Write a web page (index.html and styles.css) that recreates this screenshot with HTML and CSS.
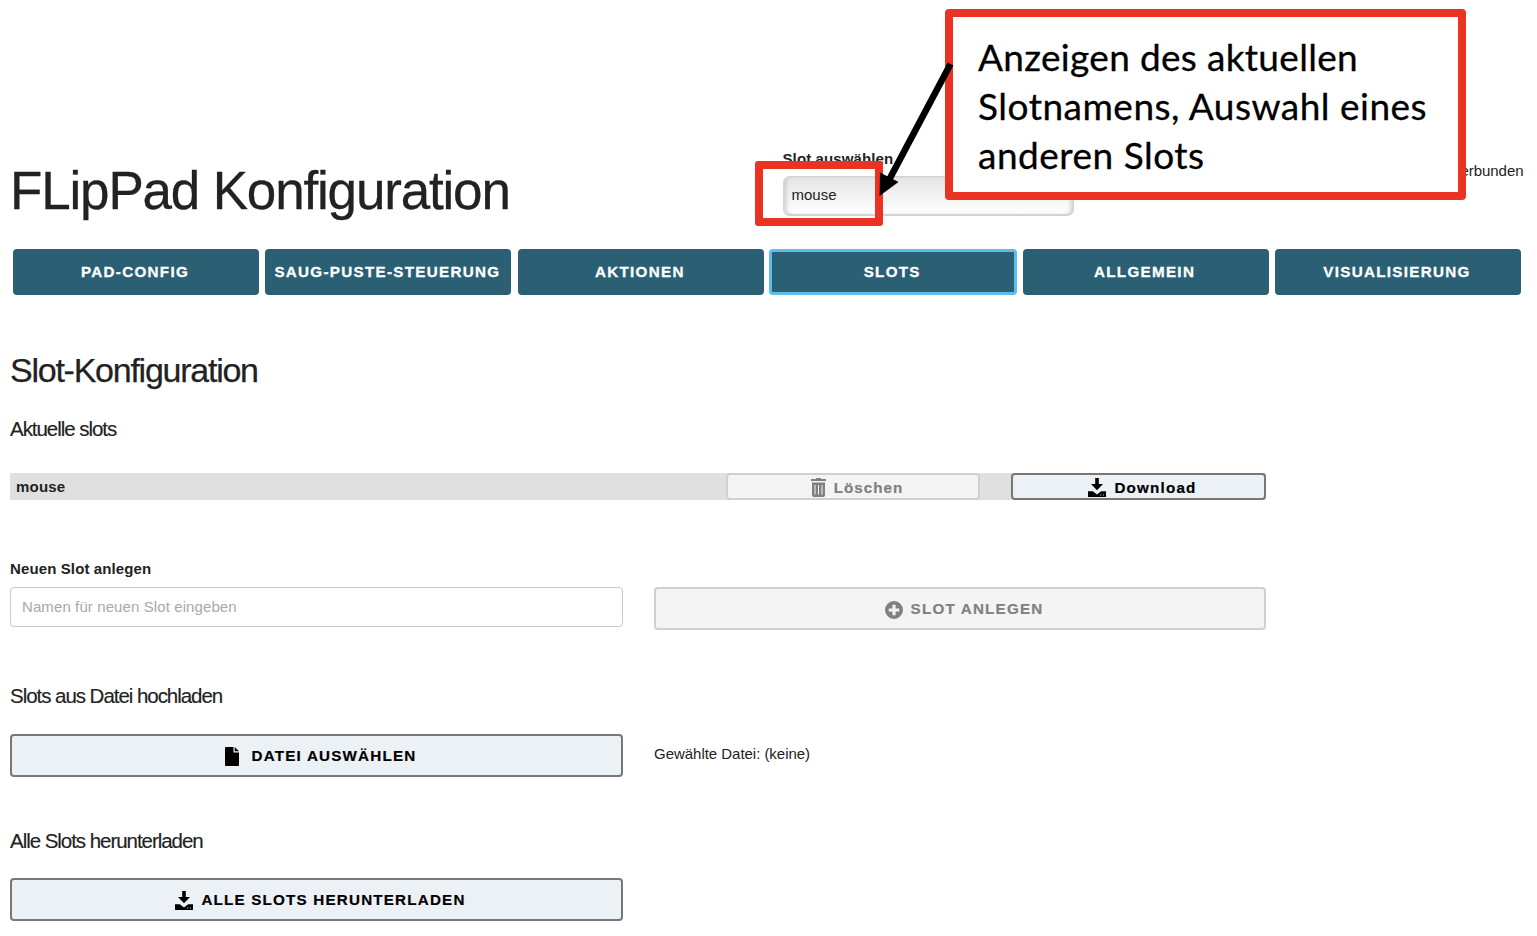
FILE: index.html
```html
<!DOCTYPE html>
<html lang="de">
<head>
<meta charset="utf-8">
<title>FLipPad Konfiguration</title>
<link rel="stylesheet" href="styles.css">
</head>
<body>
<svg class="defs" width="0" height="0">
  <symbol id="download" viewBox="0 0 18 19">
    <path d="M7.200 0h3.600v6h4.200L9 12.300 3 6h4.200z"/>
    <path d="M0 13.200h4.800L9 16.600l4.200-3.400H18V19H0z"/>
    <path class="dots" d="M12.200 16.600h1v1h-1zM14.800 16.600h1v1h-1z"/>
  </symbol>
</svg>
<header class="header">
  <h1 class="title">FLipPad Konfiguration</h1>
  <div class="slot-select">
    <label class="label select-label" for="slot">Slot auswählen</label>
    <div class="select" id="slot"><span>mouse</span><span class="select-arrow"></span></div>
  </div>
  <div class="status">Verbunden</div>
</header>
<nav class="tabs">
  <button class="tab">PAD-CONFIG</button>
  <button class="tab">SAUG-PUSTE-STEUERUNG</button>
  <button class="tab">AKTIONEN</button>
  <button class="tab active">SLOTS</button>
  <button class="tab">ALLGEMEIN</button>
  <button class="tab">VISUALISIERUNG</button>
</nav>
<main class="content">
  <h2 class="section-title">Slot-Konfiguration</h2>
  <h3 class="sub current">Aktuelle slots</h3>
  <div class="slot-row">
    <span class="slot-name">mouse</span>
    <button class="btn small disabled">
      <svg class="icon" width="15" height="19" viewBox="0 0 15 19"><path d="M5 0h5v1h5v2H0V1h5zM1 4.500h13V17q0 2-2 2H3q-2 0-2-2zM3.500 7v9.500h1V7zM7 7v9.500h1V7zM10.500 7v9.500h1V7z" fill-rule="evenodd"/></svg>
      <span>Löschen</span>
    </button>
    <button class="btn small">
      <svg class="icon" width="18" height="19"><use href="#download"/></svg>
      <span class="b-download">Download</span>
    </button>
  </div>
  <label class="label new-label" for="name">Neuen Slot anlegen</label>
  <div class="columns new-row">
    <input class="input" id="name" placeholder="Namen für neuen Slot eingeben">
    <button class="btn disabled">
      <svg class="icon" width="18" height="18" viewBox="0 0 18 18"><path fill-rule="evenodd" d="M9 0a9 9 0 1 1 0 18A9 9 0 0 1 9 0zM7.400 3.700v3.700H3.700v3.200h3.700v3.700h3.200v-3.700h3.700V7.400h-3.700V3.700z"/></svg>
      <span>SLOT ANLEGEN</span>
    </button>
  </div>
  <h3 class="sub upload">Slots aus Datei hochladen</h3>
  <div class="columns">
    <button class="btn wide-gap">
      <svg class="icon" width="14" height="19" viewBox="0 0 14 19"><path d="M1 0h7.500v5.500H14V18q0 1-1 1H1q-1 0-1-1V1q0-1 1-1zM9.700 0L14 4.300H9.700z"/></svg>
      <span>DATEI AUSWÄHLEN</span>
    </button>
    <span class="file">Gewählte Datei: (keine)</span>
  </div>
  <h3 class="sub all">Alle Slots herunterladen</h3>
  <div class="columns">
    <button class="btn">
      <svg class="icon" width="18" height="19"><use href="#download"/></svg>
      <span>ALLE SLOTS HERUNTERLADEN</span>
    </button>
  </div>
</main>
<div class="highlight"></div>
<div class="callout">
  <div class="line one">Anzeigen des aktuellen</div>
  <div class="line">Slotnamens, Auswahl eines</div>
  <div class="line">anderen Slots</div>
</div>
<svg class="arrow" width="90" height="150" viewBox="870 55 90 150"><path d="M950.500 64L889 180" stroke="#000" stroke-width="6.600"/><path d="M880 172.500l18.500 9.500L879.500 196z"/></svg>
</body>
</html>
```
FILE: styles.css
```css
* { box-sizing: border-box; }
body {
  position: relative;
  margin: 0;
  width: 1537px;
  height: 936px;
  overflow: hidden;
  background: #fff;
  color: #222;
  font: 15px/24px "Liberation Sans", Arial, sans-serif;
}
h1, h2, h3 { margin: 0; font-weight: 400; white-space: nowrap; }
button { font-family: inherit; margin: 0; white-space: nowrap; }
.defs { position: absolute; }

.header { display: flex; height: 249px; padding: 147px 13.500px 0 10px; }
.title { width: 772.500px; font-size: 53px; line-height: 64px; padding-top: 12px; letter-spacing: -1.180px; -webkit-text-stroke: 0.3px; }
.slot-select { width: 291px; }
.label { display: block; font-weight: 700; letter-spacing: 0.120px; }
.select {
  display: flex;
  align-items: center;
  justify-content: space-between;
  height: 40px;
  margin-top: 5px;
  padding: 0 8px 2px;
  border: 1.500px solid #d2d2d2;
  border-bottom-width: 2px;
  border-radius: 7px;
  background: linear-gradient(#e4e4e4, #fff);
  box-shadow: inset 4px 0 4px -2px #ccc, inset -4px 0 4px -2px #ccc;
}
.select-arrow { position: relative; top: 2px; border: 4px solid transparent; border-top: 6px solid #222; border-bottom: 0; }
.status { margin-left: auto; padding-top: 12px; letter-spacing: -0.050px; }

.tabs { display: grid; grid-template-columns: repeat(6, 1fr); gap: 6.400px; padding: 0 16px 0 13px; }
.tab {
  height: 46px;
  padding: 0 2px 1px 0;
  border: 0;
  border-radius: 4px;
  background: #2a5f74;
  color: #fff;
  font-size: 15.200px;
  font-weight: 700;
  letter-spacing: 1.300px;
  -webkit-text-stroke: 0.300px;
}
.active { border: 3px solid #5dbdeb; margin: 0 -1px; }

.content { width: 1266px; padding: 50px 0 0 10px; }
.section-title { font-size: 34px; line-height: 50px; letter-spacing: -1.250px; -webkit-text-stroke: 0.250px; }
.sub { font-size: 20.500px; line-height: 28px; letter-spacing: -1.040px; -webkit-text-stroke: 0.150px; }
.current { margin: 20px 0 30px; }
.slot-row { display: grid; grid-template-columns: 685px 254px 255px; gap: 31px; height: 27px; background: #e0e0e0; }
.slot-name { padding-left: 6px; font-weight: 700; line-height: 28px; letter-spacing: 0.200px; }
.btn {
  display: flex;
  align-items: center;
  justify-content: center;
  gap: 8px;
  height: 43px;
  padding: 0 0 0 8px;
  border: 2px solid #777;
  border-radius: 4px;
  background: #ecf1f6;
  color: #000;
  font-size: 15.200px;
  font-weight: 700;
  letter-spacing: 1.200px;
  -webkit-text-stroke: 0.200px;
}
.small { height: 27px; letter-spacing: 1px; }
.small span { position: relative; top: 0.500px; }
.b-download { letter-spacing: 1.200px; }
.disabled { border-color: #d0d0d0; background: #f4f4f4; color: #808080; }
.icon { flex: none; fill: currentColor; stroke: none; position: relative; top: 1px; }
.dots { fill: #ecf1f6; }
.wide-gap { gap: 13px; }
.new-label { margin-top: 57px; margin-bottom: 6px; }
.columns { display: grid; grid-template-columns: 613px 612px; gap: 31px; }
.input {
  height: 40px;
  padding: 0 11px 1px;
  border: 1px solid #c8c8c8;
  border-radius: 4px;
  font: inherit;
  letter-spacing: 0.100px;
}
.input::placeholder { color: #a9a9a9; }
.upload { margin: 52px 0 24px; }
.file { padding-top: 8px; letter-spacing: -0.030px; }
.all { margin: 50px 0 23px; }

.highlight { position: absolute; left: 755px; top: 161px; width: 128px; height: 65px; border: 8px solid #ea3323; border-radius: 3px; }
.callout {
  position: absolute;
  left: 945px;
  top: 9px;
  width: 521px;
  height: 191px;
  padding: 15px 25px;
  border: 8px solid #ea3323;
  border-radius: 4px;
  background: #fff;
  color: #000;
  font: 37px/49px Lato, sans-serif;
  letter-spacing: 0.500px;
  white-space: nowrap;
  -webkit-text-stroke: 0.300px;
}
.one { letter-spacing: 0.320px; }
.arrow { position: absolute; left: 870px; top: 55px; }
```
